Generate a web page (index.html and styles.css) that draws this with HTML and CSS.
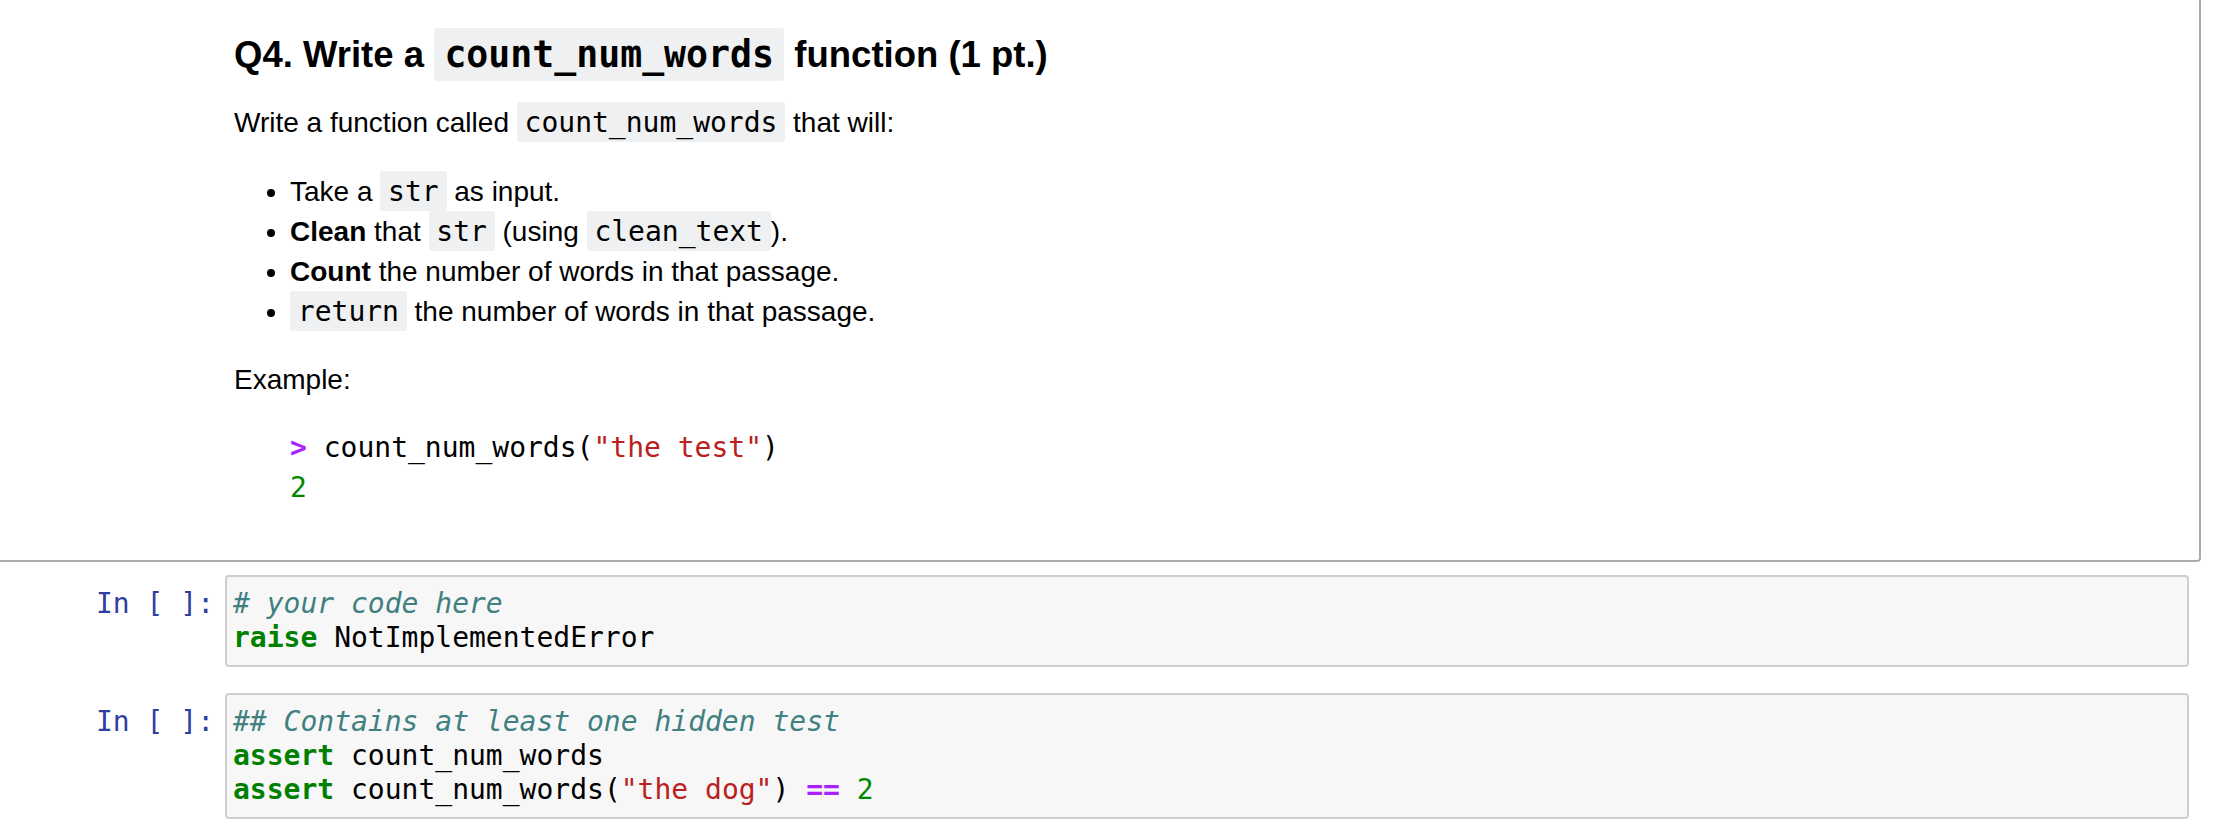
FILE: index.html
```html
<!DOCTYPE html>
<html lang="en">
<head>
<meta charset="utf-8">
<title>Q4 count_num_words</title>
<link rel="stylesheet" href="styles.css">
</head>
<body>
<div class="notebook">
  <div class="cell md-cell">
    <div class="prompt"></div>
    <div class="inner">
      <div class="md">
        <h3>Q4. Write a <code>count_num_words</code> function (1 pt.)</h3>
        <p>Write a function called <code>count_num_words</code> that will:</p>
        <ul>
          <li>Take a <code>str</code> as input.</li>
          <li><strong>Clean</strong> that <code>str</code> (using <code>clean_text</code>).</li>
          <li><strong>Count</strong> the number of words in that passage.</li>
          <li><code>return</code> the number of words in that passage.</li>
        </ul>
        <p>Example:</p>
        <pre class="example"><span class="op">&gt;</span> count_num_words(<span class="str">"the test"</span>)
<span class="num">2</span></pre>
      </div>
    </div>
  </div>

  <div class="cell code-cell">
    <div class="prompt in">In&nbsp;[&nbsp;]:</div>
    <div class="input"><pre><span class="cm"># your code here</span>
<span class="kw">raise</span> NotImplementedError</pre></div>
  </div>

  <div class="cell code-cell">
    <div class="prompt in">In&nbsp;[&nbsp;]:</div>
    <div class="input"><pre><span class="cm">## Contains at least one hidden test</span>
<span class="kw">assert</span> count_num_words
<span class="kw">assert</span> count_num_words(<span class="str">"the dog"</span>) <span class="op">==</span> <span class="num">2</span></pre></div>
  </div>
</div>
</body>
</html>
```

FILE: styles.css
```css
html, body {
  margin: 0;
  padding: 0;
  background: #ffffff;
}

body {
  font-family: "Liberation Sans", Arial, Helvetica, sans-serif;
  font-size: 28px;
  line-height: 40px;
  color: #000000;
  overflow: hidden;
}

.notebook {
  width: 2211px;
  margin: -40px 0 0 -10px;
}

.cell {
  display: flex;
  align-items: flex-start;
  border: 2px solid transparent;
  border-radius: 4px;
  padding: 11px 10px;
}

.md-cell {
  border-color: #ababab;
  padding: 10px;
}

.prompt {
  flex: 0 0 223px;
  box-sizing: border-box;
  padding-right: 11px;
  text-align: right;
  font-family: "DejaVu Sans Mono", "Liberation Mono", monospace;
  font-size: 28px;
  line-height: 34px;
  color: #303f9f;
}

.prompt.in {
  padding-top: 11.5px;
}

.inner {
  flex: 1 1 auto;
  min-width: 0;
}

.md {
  padding: 14px 14px 14px 9px;
}

.md h3 {
  font-size: 36.5px;
  line-height: 36px;
  font-weight: bold;
  margin: 51px 0 0 0;
}

.md p {
  margin: 28px 0 0 0;
}

.md h3 + p {
  margin-top: 29.5px;
}

.md ul {
  margin: 29px 0 0 0;
  padding-left: 56px;
  list-style: disc;
}

.md code {
  font-family: "DejaVu Sans Mono", "Liberation Mono", monospace;
  font-size: 100%;
  background: #eff0f1;
  padding: 0.14em 0.28em;
  border-radius: 3px;
}

.md pre.example {
  margin: 28.5px 0 28px 56px;
  padding: 0;
  font-family: "DejaVu Sans Mono", "Liberation Mono", monospace;
  font-size: 28px;
  line-height: 40px;
  background: #ffffff;
}

.input {
  flex: 1 1 auto;
  min-width: 0;
  border: 2px solid #cfcfcf;
  border-radius: 4px;
  background: #f7f7f7;
  padding: 9.5px 6px 10.5px;
}

.input pre {
  margin: 0;
  font-family: "DejaVu Sans Mono", "Liberation Mono", monospace;
  font-size: 28px;
  line-height: 34px;
  color: #000000;
}

.kw {
  color: #008000;
  font-weight: bold;
}

.cm {
  color: #408080;
  font-style: italic;
}

.str {
  color: #ba2121;
}

.op {
  color: #aa22ff;
  font-weight: bold;
}

.num {
  color: #008800;
}
```
